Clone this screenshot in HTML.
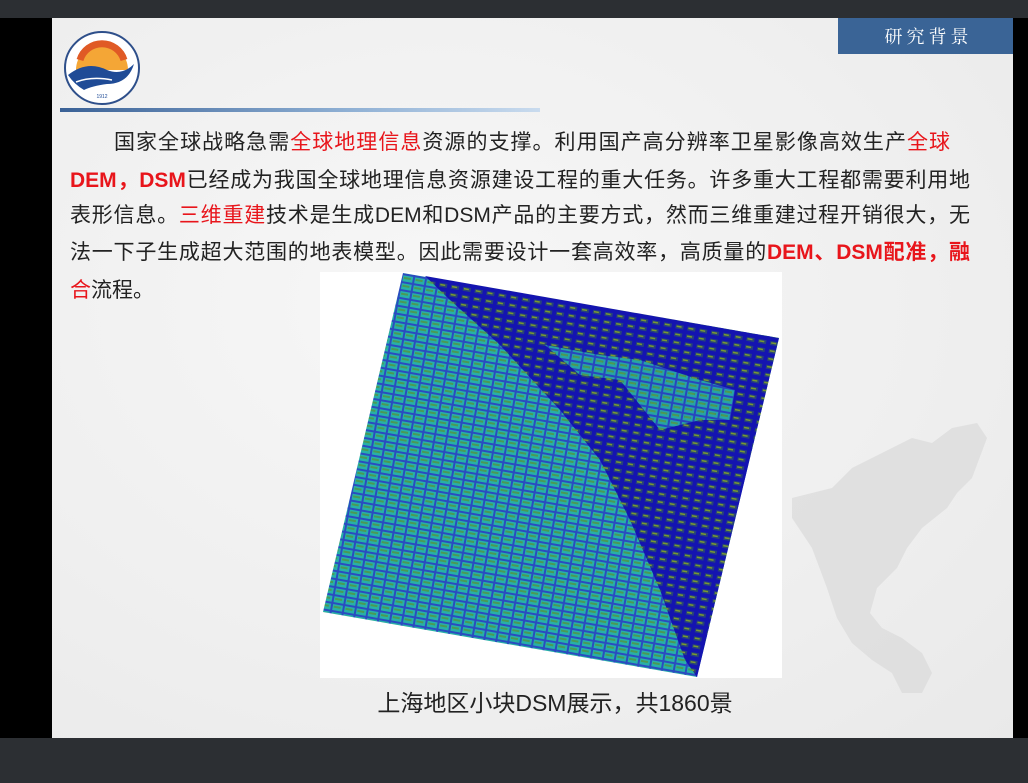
<!DOCTYPE html>
<html><head><meta charset="utf-8"><style>
*{margin:0;padding:0;box-sizing:border-box}
body{width:1028px;height:783px;background:#000;position:relative;overflow:hidden;font-family:"Liberation Sans","Noto Sans CJK SC",sans-serif}
.top{position:absolute;left:0;top:0;width:1028px;height:18px;background:#2c2f33}
.bot{position:absolute;left:0;top:738px;width:1028px;height:45px;background:#2c2f33}
.slide{position:absolute;left:52px;top:18px;width:961px;height:720px;background:radial-gradient(ellipse at 40% 40%,#f7f7f7 0%,#efefef 60%,#e9e9e9 100%);overflow:hidden}
.hdr{position:absolute;left:838px;top:18px;width:175px;height:36px;background:#3a6496;color:#fff;font-family:"Noto Serif CJK SC",serif;font-size:18px;letter-spacing:4px;text-align:center;line-height:36px;padding-left:6px}
.rule{position:absolute;left:60px;top:108px;width:480px;height:4px;background:linear-gradient(90deg,#3a6196,#8fb0d4 60%,#c9dbee)}
.ln{position:absolute;left:70px;width:900px;font-size:21px;color:#222;white-space:nowrap;text-align:justify;text-align-last:justify;line-height:26px}
.r{color:#e8151b}.b{font-weight:bold}
.cap{position:absolute;left:320px;top:684px;width:470px;text-align:center;font-size:23px;color:#222}
</style></head><body>
<div class="top"></div>
<div class="slide">
<svg style="position:absolute;left:730px;top:380px" width="230" height="300" viewBox="0 0 230 300">
<path d="M10 100 L50 90 L70 70 L100 55 L130 40 L150 45 L170 30 L195 25 L205 40 L190 80 L175 95 L165 110 L140 130 L125 150 L115 170 L95 190 L88 215 L100 230 L120 240 L140 255 L150 275 L140 295 L120 295 L110 275 L90 262 L70 245 L55 220 L45 190 L30 150 L10 120 Z" fill="#dadada" opacity=".7"/>
</svg>
</div>
<div class="hdr">研究背景</div>
<svg style="position:absolute;left:62px;top:30px" width="80" height="76" viewBox="0 0 80 76">
<ellipse cx="40" cy="38" rx="37" ry="36" fill="#fff" stroke="#2e4f8a" stroke-width="2"/>
<path d="M14 40 A26 26 0 0 1 66 40 Z" fill="#f4a636"/>
<path d="M18 30 A23 23 0 0 1 62 30" fill="none" stroke="#e05a25" stroke-width="7"/>
<path d="M6 45 Q25 30 45 40 Q60 46 72 34 Q66 54 45 54 Q30 56 22 60 Q12 54 6 45 Z" fill="#1f4b96"/>
<path d="M14 52 Q30 46 50 50" stroke="#fff" stroke-width="1.5" fill="none"/>
<text x="40" y="68" font-size="5" text-anchor="middle" fill="#1f4b96">1912</text>
</svg>
<div class="rule"></div>
<div class="ln" style="left:114px;width:836px;top:130px">国家全球战略急需<span class="r">全球地理信息</span>资源的支撑。利用国产高分辨率卫星影像高效生产<span class="r">全球</span></div>
<div class="ln" style="top:168px"><span class="r b">DEM，DSM</span>已经成为我国全球地理信息资源建设工程的重大任务。许多重大工程都需要利用地</div>
<div class="ln" style="top:203px">表形信息。<span class="r">三维重建</span>技术是生成DEM和DSM产品的主要方式，然而三维重建过程开销很大，无</div>
<div class="ln" style="top:240px">法一下子生成超大范围的地表模型。因此需要设计一套高效率，高质量的<span class="r b">DEM、DSM配准，融</span></div>
<div class="ln" style="top:278px;text-align-last:left"><span class="r">合</span>流程。</div>
<svg style="position:absolute;left:320px;top:272px" width="462" height="406" viewBox="320 272 462 406">
<defs>
<pattern id="t" width="12" height="8" patternUnits="userSpaceOnUse" patternTransform="rotate(10)">
<rect width="12" height="8" fill="#2a4cc0"/><rect x="1" y="1" width="10" height="6" fill="#27b0a8"/><rect x="2" y="2.5" width="7" height="2" fill="#4a9a55"/></pattern>
<pattern id="d" width="12" height="8" patternUnits="userSpaceOnUse" patternTransform="rotate(10)">
<rect width="12" height="8" fill="#1414b0"/><rect x="2" y="2" width="8" height="4" fill="#28437a"/><rect x="3" y="3" width="5" height="1.5" fill="#7a9a30"/></pattern>
</defs>
<rect x="320" y="272" width="462" height="406" fill="#fff"/>
<polygon points="403,273 779,338 697,677 323,612" fill="url(#t)"/>
<polygon points="425,276 779,338 697,677 685,660 660,590 630,520 600,460 560,410 500,345 450,300" fill="url(#d)"/>
<polygon points="545,345 600,355 640,360 700,380 735,390 730,420 700,420 660,430 620,380 580,375" fill="url(#t)" opacity=".9"/>
</svg>
<div class="cap">上海地区小块DSM展示，共1860景</div>
<div class="bot"></div>
</body></html>
